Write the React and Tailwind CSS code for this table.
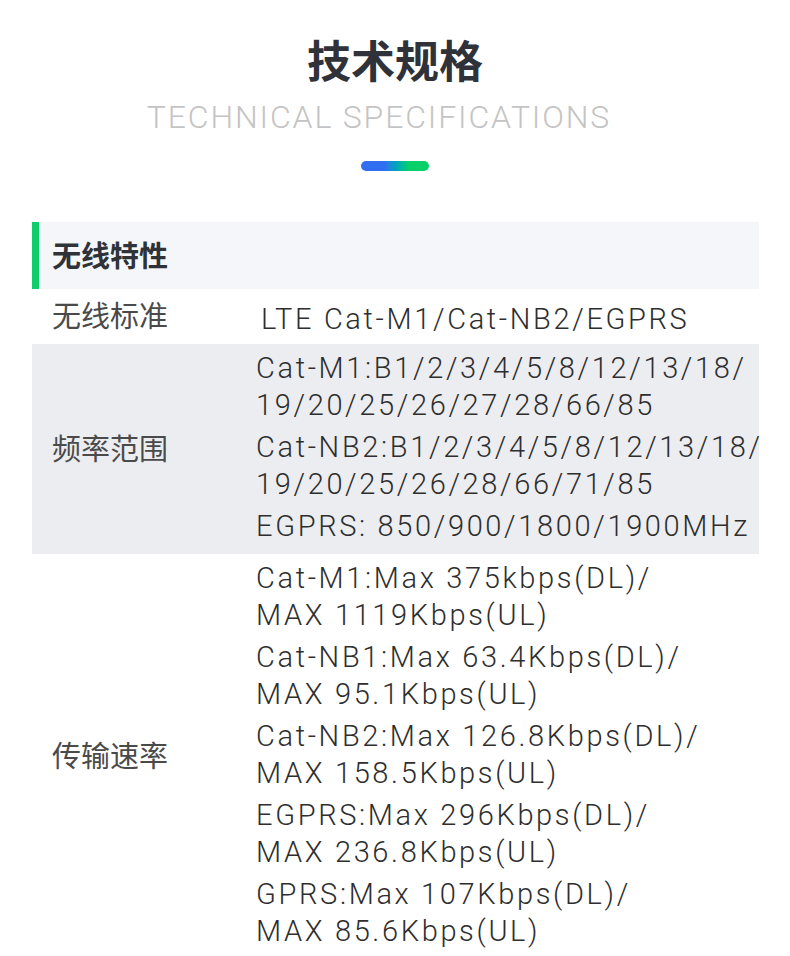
import React from 'react';

const SANS = "font-['Roboto','Noto_Sans_CJK_SC',sans-serif]";

// 技术规格表的数据：每个值是一组换行后的文字
const rows = [
    {
        label: '无线标准',
        bg: 'bg-white',
        pad: 'pt-[12px] pb-[6px] pl-[5px]',
        items: [['LTE Cat-M1/Cat-NB2/EGPRS']],
    },
    {
        label: '频率范围',
        bg: 'bg-[#ecedf0]',
        pad: 'pt-[6px] pb-[9px]',
        items: [
            ['Cat-M1:B1/2/3/4/5/8/12/13/18/', '19/20/25/26/27/28/66/85'],
            ['Cat-NB2:B1/2/3/4/5/8/12/13/18/', '19/20/25/26/28/66/71/85'],
            ['EGPRS: 850/900/1800/1900MHz'],
        ],
    },
    {
        label: '传输速率',
        bg: 'bg-white',
        pad: 'pt-[6px] pb-[9px]',
        items: [
            ['Cat-M1:Max 375kbps(DL)/', 'MAX 1119Kbps(UL)'],
            ['Cat-NB1:Max 63.4Kbps(DL)/', 'MAX 95.1Kbps(UL)'],
            ['Cat-NB2:Max 126.8Kbps(DL)/', 'MAX 158.5Kbps(UL)'],
            ['EGPRS:Max 296Kbps(DL)/', 'MAX 236.8Kbps(UL)'],
            ['GPRS:Max 107Kbps(DL)/', 'MAX 85.6Kbps(UL)'],
        ],
    },
];

function SpecRow({ label, bg, pad, items }) {
    return (
        <div className={`flex ${bg}`}>
            {/* Label */}
            <div className="w-[224px] shrink-0 flex items-center pl-[20px] pt-[2px] text-[29px] leading-[37px] text-[#4a4a4a]">
                {label}
            </div>
            {/* Values */}
            <div className={`flex flex-col gap-[5px] ${pad}`}>
                {items.map((lines, i) => (
                    <div key={i} className="flex flex-col">
                        {lines.map((line) => (
                            <span
                                key={line}
                                className="whitespace-nowrap text-[29px] leading-[37px] font-light tracking-[2.65px] text-[#2e2e2e]"
                            >
                                {line}
                            </span>
                        ))}
                    </div>
                ))}
            </div>
        </div>
    );
}

export default function App() {
    return (
        <div className={`w-[790px] min-h-[956px] bg-white overflow-hidden ${SANS}`}>
            {/* Heading */}
            <div className="flex flex-col items-center pt-[41px]">
                <h1 className="text-[44px] leading-[44px] font-bold text-[#2f3238]">技术规格</h1>
                <p className="mt-[16px] pr-[32px] text-[32px] leading-[32px] font-light tracking-[1.85px] text-[#c4c4c4]">
                    TECHNICAL SPECIFICATIONS
                </p>
                <div className="mt-[28px] w-[68px] h-[10px] rounded-full bg-gradient-to-r from-[#2f6ef0] from-35% to-[#08d069] to-70%" />
            </div>

            {/* Spec table */}
            <div className="ml-[32px] mr-[31px] mt-[51px]">
                <div className="flex h-[67px] bg-[#f5f6fa]">
                    <div className="w-[7px] bg-[#10cc6a]" />
                    <div className="flex items-center pl-[13px] pt-[5px] text-[29px] font-bold text-[#2f3338]">
                        无线特性
                    </div>
                </div>
                {rows.map((row) => (
                    <SpecRow key={row.label} {...row} />
                ))}
            </div>
        </div>
    );
}
